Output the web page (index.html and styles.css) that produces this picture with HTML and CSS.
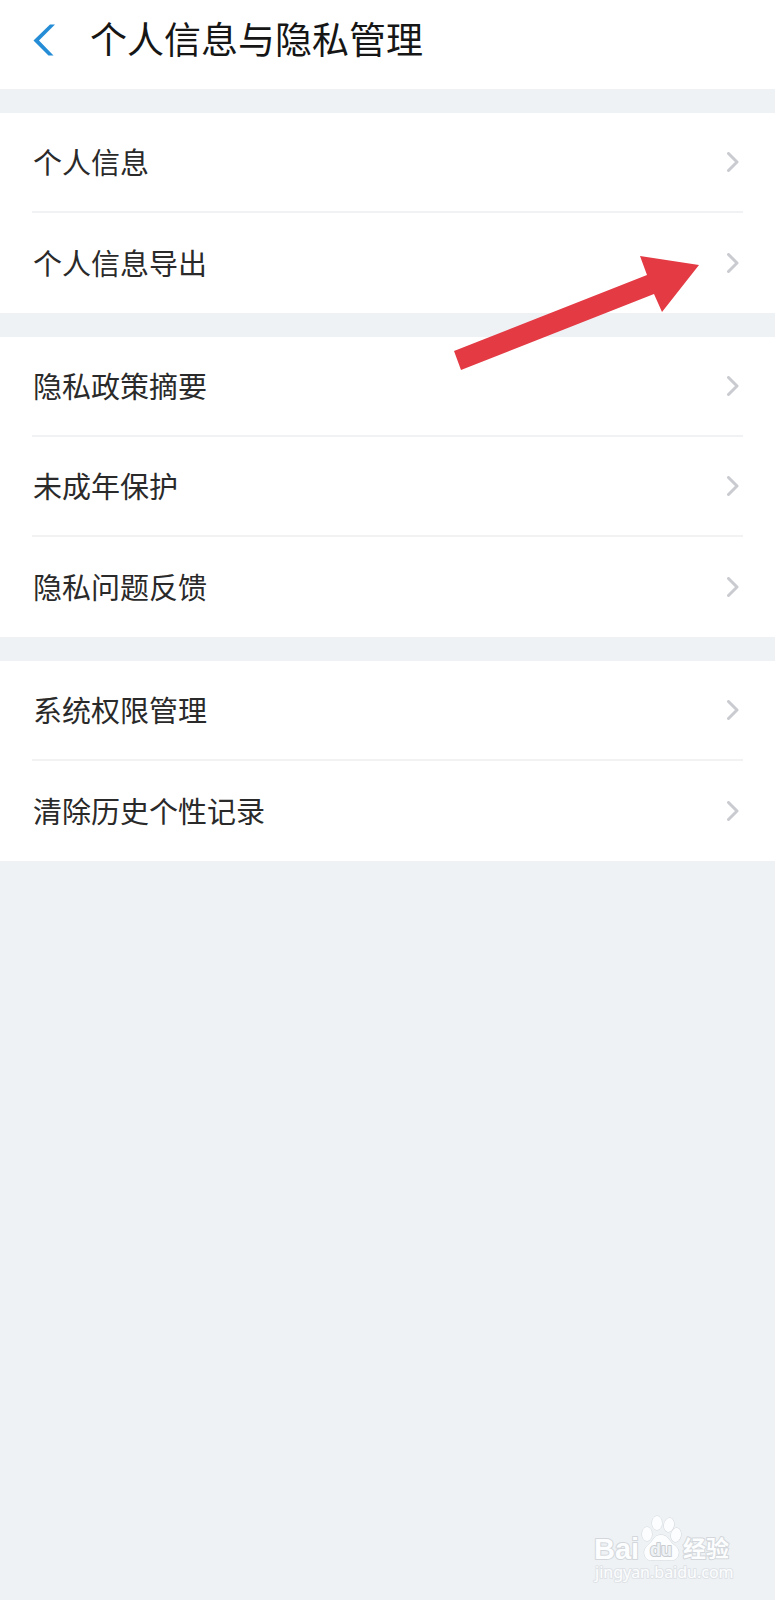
FILE: index.html
```
<!DOCTYPE html>
<html lang="zh-CN">
<head>
  <meta charset="UTF-8">
  <meta name="viewport" content="width=device-width, initial-scale=1.0">
  <title>个人信息与隐私管理</title>
  <link rel="stylesheet" href="styles.css">
</head>
<body>
  <svg class="sprite" aria-hidden="true">
    <symbol id="chevron" viewBox="0 0 12 20">
      <path d="M1.5 1.5 L10 10 L1.5 18.5" fill="none" stroke="currentColor" stroke-width="3" stroke-linecap="round" stroke-linejoin="round"/>
    </symbol>
  </svg>

  <header class="header">
    <button class="back" type="button" aria-label="返回">
      <svg width="22" height="32" viewBox="0 0 22 32">
        <path d="M17 0.5 H22 L6 16.5 L20.5 31.5 H15.5 L0.5 16.5 Z" fill="#258cd6"/>
      </svg>
    </button>
    <h1>个人信息与隐私管理</h1>
  </header>

  <main class="settings">
    <ul class="group">
      <li><a class="row" href="#info"><span class="label">个人信息</span><svg class="chevron"><use href="#chevron"/></svg></a></li>
      <li class="marked">
        <a class="row" href="#export"><span class="label">个人信息导出</span><svg class="chevron"><use href="#chevron"/></svg></a>
        <svg class="arrow" width="250" height="120" viewBox="0 0 250 120" aria-hidden="true">
          <path d="M2 99 L195 23 L188 4 L247 13 L210 60 L202 42 L9 118 Z" fill="#e33a44"/>
        </svg>
      </li>
    </ul>

    <ul class="group">
      <li><a class="row" href="#policy"><span class="label">隐私政策摘要</span><svg class="chevron"><use href="#chevron"/></svg></a></li>
      <li><a class="row" href="#minors"><span class="label">未成年保护</span><svg class="chevron"><use href="#chevron"/></svg></a></li>
      <li><a class="row" href="#feedback"><span class="label">隐私问题反馈</span><svg class="chevron"><use href="#chevron"/></svg></a></li>
    </ul>

    <ul class="group">
      <li><a class="row" href="#permissions"><span class="label">系统权限管理</span><svg class="chevron"><use href="#chevron"/></svg></a></li>
      <li><a class="row" href="#history"><span class="label">清除历史个性记录</span><svg class="chevron"><use href="#chevron"/></svg></a></li>
    </ul>
  </main>

  <footer class="footer">
    <svg class="watermark" width="145" height="72" viewBox="0 0 145 72">
      <text class="brand" x="4" y="47">Bai</text>
      <g class="paw">
        <ellipse cx="57" cy="22" rx="5" ry="7"/>
        <ellipse cx="67" cy="11" rx="5" ry="7"/>
        <ellipse cx="79" cy="13" rx="5" ry="7" transform="rotate(10 79 13)"/>
        <ellipse cx="86" cy="23" rx="5" ry="7" transform="rotate(10 86 23)"/>
        <path d="M71 23 C78 23 79 29 83 32 C88 36 90 39 88 44 C86 50 79 48 71 48 C63 48 57 50 55 44 C53 39 55 36 59 32 C64 28 64 23 71 23 Z"/>
      </g>
      <text class="du" x="60" y="44">du</text>
      <text class="brand-cn" x="93" y="45">经验</text>
      <text class="site" x="5" y="66">jingyan.baidu.com</text>
    </svg>
  </footer>
</body>
</html>
```

FILE: styles.css
```
* {
  box-sizing: border-box;
}

body {
  font-family: "Noto Sans CJK SC", sans-serif;
  margin: 0;
  display: flex;
  flex-direction: column;
  min-height: 100vh;
  background-color: #eef2f5;
  color: #2a2a2a;
}

.sprite {
  display: none;
}

.header {
  display: flex;
  align-items: center;
  gap: 35px;
  padding: 12px 33px 21px;
  background-color: #fff;
}

.back {
  display: flex;
  padding: 0;
  border: none;
  background: none;
  cursor: pointer;
}

h1 {
  margin: 0;
  padding-bottom: 4px;
  font-size: 37px;
  font-weight: 400;
  line-height: 52px;
  color: #161616;
}

.settings {
  display: flex;
  flex-direction: column;
  gap: 24px;
  padding-top: 24px;
}

.group {
  margin: 0;
  padding: 0 32px;
  list-style: none;
  background-color: #fff;
}

.row {
  display: flex;
  justify-content: space-between;
  align-items: center;
  height: 100px;
  padding: 0 4px 0 1px;
  font-size: 29px;
  color: inherit;
  text-decoration: none;
}

.label {
  padding-bottom: 3px;
}

.group li:not(:last-child) .row {
  border-bottom: 2px solid #f1f2f4;
}

.chevron {
  width: 12px;
  height: 20px;
  color: #c9cbd0;
}

.marked {
  position: relative;
}

/* lies over the row and the group below it */
.arrow {
  position: absolute;
  top: 39px;
  right: 41px;
  pointer-events: none;
}

.footer {
  display: flex;
  justify-content: flex-end;
  margin-top: auto;
  padding: 16px 40px;
}

.watermark {
  fill: #fcfdfe;
  stroke: #d3d7db;
  stroke-width: 2px;
  stroke-linejoin: round;
  paint-order: stroke;
}

.brand {
  font: bold 29px "Liberation Sans", sans-serif;
}

.paw {
  stroke-width: 1px;
}

.du {
  font: bold 18px "Liberation Sans", sans-serif;
  fill: #eef2f5;
  stroke: #c9cdd1;
}

.brand-cn {
  font: bold 23px "Noto Sans CJK SC", sans-serif;
}

.site {
  font: 16px "Noto Sans", sans-serif;
  stroke: #dfe3e7;
}
```
